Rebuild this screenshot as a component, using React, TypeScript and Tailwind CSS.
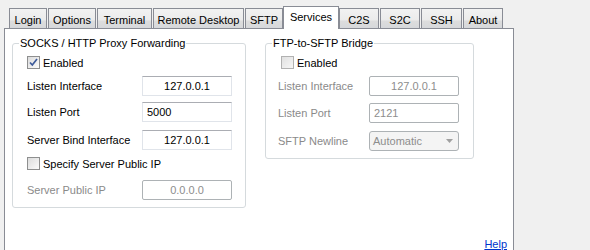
import React from "react";

type Tab = { label: string; w: string; selected?: boolean };

const tabs: Tab[] = [
  { label: "Login", w: "w-[38px]" },
  { label: "Options", w: "w-[48px]" },
  { label: "Terminal", w: "w-[55px]" },
  { label: "Remote Desktop", w: "w-[91px]" },
  { label: "SFTP", w: "w-[38px]" },
  { label: "Services", w: "w-[56px]", selected: true },
  { label: "C2S", w: "w-[40px]" },
  { label: "S2C", w: "w-[40px]" },
  { label: "SSH", w: "w-[41px]" },
  { label: "About", w: "w-[40px]" },
];

const Checkbox = ({ checked, disabled }: { checked?: boolean; disabled?: boolean }) => (
  <span
    className={
      "flex h-[13px] w-[13px] shrink-0 items-center justify-center border " +
      (disabled
        ? "border-[#b1b1b1] bg-[linear-gradient(135deg,#e0e0e0,#f6f6f6)]"
        : "border-[#8e8f8f] bg-[linear-gradient(135deg,#dcdcdc,#fbfbfb)]")
    }
  >
    {checked && (
      <svg width="9" height="9" viewBox="0 0 9 9">
        <path d="M1 4.5 L3.3 7 L8 1" stroke="#3c5a9a" strokeWidth="1.7" fill="none" />
      </svg>
    )}
  </span>
);

const CheckRow = ({ label, checked, disabled, className }: { label: string; checked?: boolean; disabled?: boolean; className: string }) => (
  <label className={"flex h-[13px] items-center gap-[3px] " + className}>
    <Checkbox checked={checked} disabled={disabled} />
    <span className="text-black">{label}</span>
  </label>
);

const TextBox = ({ value, center, disabled }: { value: string; center?: boolean; disabled?: boolean }) => (
  <div
    className={
      "flex h-[20px] w-[90px] items-center px-[4px] " +
      (center ? "justify-center " : "") +
      (disabled
        ? "rounded-[2px] border border-[#adb2b5] bg-white text-[#8d8d8d]"
        : "border border-[#e0e4ea] border-t-[#abadb3] bg-white text-black")
    }
  >
    {value}
  </div>
);

const Row = ({ label, labelW, disabled, className, children }: { label: string; labelW: string; disabled?: boolean; className: string; children: React.ReactNode }) => (
  <div className={"flex items-center " + className}>
    <span className={labelW + (disabled ? " text-[#8a8a8a]" : " text-black")}>{label}</span>
    {children}
  </div>
);

export default function App() {
  return (
    <div className="h-[250px] w-[590px] overflow-hidden bg-[#f0f0f0] text-[11px] leading-[14px] font-['Liberation_Sans',Arial,sans-serif]">
      <div className="flex h-[28px] items-end gap-[1px] pl-[9px] pt-[6px]">
        {tabs.map((t) =>
          t.selected ? (
            <div
              key={t.label}
              className={"relative z-10 -mx-[1px] -mb-[1px] flex h-[23px] items-start justify-center border border-b-0 border-[#898c95] bg-white pt-[3px] " + t.w}
            >
              {t.label}
            </div>
          ) : (
            <div
              key={t.label}
              className={"flex h-[20px] items-start justify-center border border-b-0 border-[#898c95] bg-[linear-gradient(#f2f2f2_0%,#ebebeb_60%,#dddddd_61%,#d6d8db_100%)] pt-[4px] " + t.w}
            >
              {t.label}
            </div>
          )
        )}
      </div>
      <div className="ml-[4px] flex h-[240px] w-[510px] flex-col border border-[#898c95] bg-white">
        <div className="mt-[7px] flex items-start gap-[19px] pl-[7px]">
          <fieldset className="h-[172px] w-[234px] rounded-[3px] border border-[#d5dadd] px-[6px]">
            <legend className="px-[1px] text-black">SOCKS / HTTP Proxy Forwarding</legend>
            <div className="flex flex-col pl-[8px]">
              <CheckRow label="Enabled" checked className="mt-[6px]" />
              <Row label="Listen Interface" labelW="w-[115px]" className="mt-[7px]">
                <TextBox value="127.0.0.1" center />
              </Row>
              <Row label="Listen Port" labelW="w-[115px]" className="mt-[6px]">
                <TextBox value="5000" />
              </Row>
              <Row label="Server Bind Interface" labelW="w-[115px]" className="mt-[8px]">
                <TextBox value="127.0.0.1" center />
              </Row>
              <CheckRow label="Specify Server Public IP" className="mt-[7px]" />
              <Row label="Server Public IP" labelW="w-[115px]" disabled className="mt-[10px]">
                <TextBox value="0.0.0.0" center disabled />
              </Row>
            </div>
          </fieldset>
          <fieldset className="h-[123px] w-[209px] rounded-[3px] border border-[#d5dadd] px-[6px]">
            <legend className="px-[1px] text-black">FTP-to-SFTP Bridge</legend>
            <div className="flex flex-col pl-[6px]">
              <CheckRow label="Enabled" disabled className="mt-[6px] ml-[3px]" />
              <Row label="Listen Interface" labelW="w-[91px]" disabled className="mt-[7px]">
                <TextBox value="127.0.0.1" center disabled />
              </Row>
              <Row label="Listen Port" labelW="w-[91px]" disabled className="mt-[7px]">
                <TextBox value="2121" disabled />
              </Row>
              <Row label="SFTP Newline" labelW="w-[91px]" disabled className="mt-[8px]">
                <div className="flex h-[20px] w-[90px] items-center justify-between rounded-[3px] border border-[#adb2b5] bg-[#f4f4f4] pl-[3px] pr-[5px] text-[#8d8d8d]">
                  <span>Automatic</span>
                  <svg width="7" height="4" viewBox="0 0 7 4">
                    <path d="M0 0 H7 L3.5 4 Z" fill="#a0a0a0" />
                  </svg>
                </div>
              </Row>
            </div>
          </fieldset>
        </div>
        <div className="mt-[29px] flex justify-end pr-[6px]">
          <a href="#" className="text-[#0033cc] underline">Help</a>
        </div>
      </div>
    </div>
  );
}
